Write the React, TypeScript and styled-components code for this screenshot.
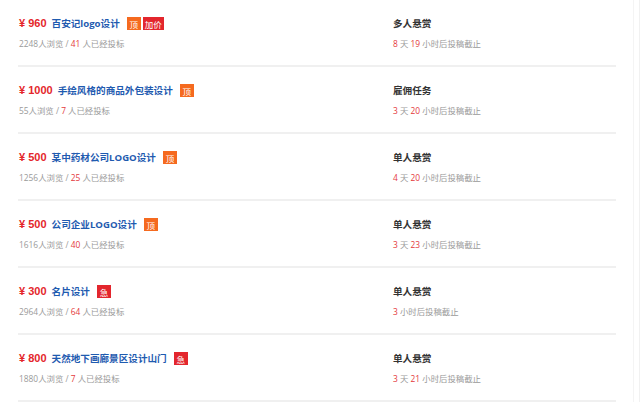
import React from 'react'
import styled, { createGlobalStyle } from 'styled-components'

const GlobalStyle = createGlobalStyle`
  html, body {
    margin: 0;
    padding: 0;
    background: #fff;
  }
  body {
    font-family: "Open Sans", "Noto Sans CJK SC", sans-serif;
  }
`

interface ITask {
  price: number
  title: string
  badges: Array<'top' | 'raise' | 'urgent'>
  views: number
  bids: number
  kind: string
  days?: number
  hours: number
}

const tasks: ITask[] = [
  { price: 960, title: '百安记logo设计', badges: ['top', 'raise'], views: 2248, bids: 41, kind: '多人悬赏', days: 8, hours: 19 },
  { price: 1000, title: '手绘风格的商品外包装设计', badges: ['top'], views: 55, bids: 7, kind: '雇佣任务', days: 3, hours: 20 },
  { price: 500, title: '某中药材公司LOGO设计', badges: ['top'], views: 1256, bids: 25, kind: '单人悬赏', days: 4, hours: 20 },
  { price: 500, title: '公司企业LOGO设计', badges: ['top'], views: 1616, bids: 40, kind: '单人悬赏', days: 3, hours: 23 },
  { price: 300, title: '名片设计', badges: ['urgent'], views: 2964, bids: 64, kind: '单人悬赏', hours: 3 },
  { price: 800, title: '天然地下画廊景区设计山门', badges: ['urgent'], views: 1880, bids: 7, kind: '单人悬赏', days: 3, hours: 21 },
]

const Page = styled.div`
  display: flex;
  height: 402px;
  overflow: hidden;
`

const List = styled.div`
  width: 598px;
  margin-left: 18px;
  display: flex;
  flex-direction: column;
`

const Edge = styled.div`
  margin-left: 17px;
  width: 5px;
  border-left: 1px solid #f4f4f4;
  border-right: 1px solid #f1f1f1;
`

const Row = styled.div`
  display: grid;
  grid-template-columns: 374px 1fr;
  padding: 14px 0 14px 1px;
  border-bottom: 2px solid #f0f0f0;
`

const Col = styled.div`
  display: flex;
  flex-direction: column;
`

const TitleLine = styled.div`
  display: flex;
  align-items: center;
  height: 17px;
  font-size: 9.6px;
  font-weight: bold;
  white-space: nowrap;
`

const Price = styled.span`
  font-family: "Liberation Sans", "Noto Sans CJK SC", sans-serif;
  font-size: 11px;
  color: #e4262b;
  margin-right: 5px;
`

const Title = styled.span`
  color: #1f5bb0;
  margin-right: 7px;
`

const Badge = styled.span<{ $tone: 'orange' | 'red' }>`
  display: inline-flex;
  align-items: center;
  justify-content: center;
  height: 13px;
  min-width: 14px;
  padding: 0 2px;
  box-sizing: border-box;
  margin: 2px 2px 0 0;
  background: ${p => (p.$tone === 'orange' ? '#f56a1f' : '#e3262d')};
  color: #fff;
  font-size: 8.5px;
  font-weight: normal;
`

const Meta = styled.div`
  margin-top: 6px;
  height: 14px;
  line-height: 14px;
  font-size: 8.4px;
  color: #9a9a9a;
  white-space: nowrap;
`

const Num = styled.span`
  color: #e4393c;
`

const Kind = styled.div`
  height: 17px;
  display: flex;
  align-items: center;
  font-size: 9.6px;
  font-weight: bold;
  color: #333;
`

const badgeLabel = { top: '顶', raise: '加价', urgent: '急' }

const TaskRow = ({ t }: { t: ITask }) => (
  <Row>
    <Col>
      <TitleLine>
        <Price>¥ {t.price}</Price>
        <Title>{t.title}</Title>
        {t.badges.map(b => (
          <Badge key={b} $tone={b === 'top' ? 'orange' : 'red'}>{badgeLabel[b]}</Badge>
        ))}
      </TitleLine>
      <Meta>
        {t.views}人浏览 / <Num>{t.bids}</Num> 人已经投标
      </Meta>
    </Col>
    <Col>
      <Kind>{t.kind}</Kind>
      <Meta>
        {t.days !== undefined && (
          <>
            <Num>{t.days}</Num> 天{' '}
          </>
        )}
        <Num>{t.hours}</Num> 小时后投稿截止
      </Meta>
    </Col>
  </Row>
)

export default function App() {
  return (
    <>
      <GlobalStyle />
      <Page>
        <List>
          {tasks.map((t, i) => (
            <TaskRow key={i} t={t} />
          ))}
        </List>
        <Edge />
      </Page>
    </>
  )
}
